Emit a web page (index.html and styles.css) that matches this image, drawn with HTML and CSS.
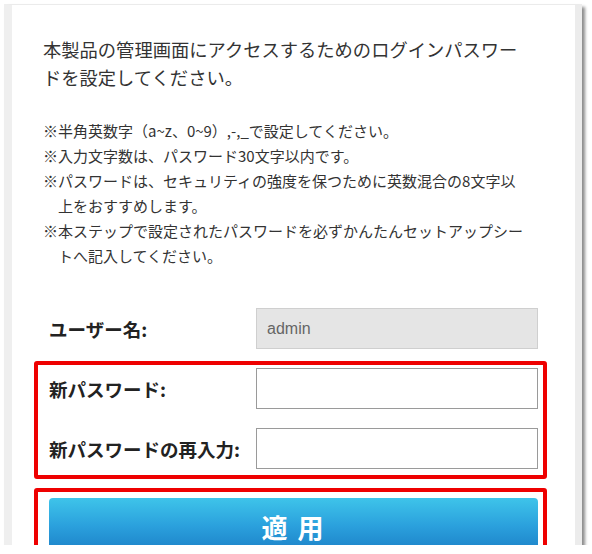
FILE: index.html
```html
<!DOCTYPE html>
<html lang="ja">
<head>
<meta charset="utf-8">
<link rel="stylesheet" href="styles.css">
</head>
<body>
<div class="page">
  <div class="frame">
    <div class="content">
      <p class="lead">本製品の管理画面にアクセスするためのログインパスワー<br>ドを設定してください。</p>
      <ul class="notes">
        <li>※半角英数字（a~z、0~9）,-,_で設定してください。</li>
        <li>※入力文字数は、パスワード30文字以内です。</li>
        <li>※パスワードは、セキュリティの強度を保つために英数混合の8文字以<br>上をおすすめします。</li>
        <li>※本ステップで設定されたパスワードを必ずかんたんセットアップシー<br>トへ記入してください。</li>
      </ul>
      <div class="form">
        <div class="row plain">
          <label class="label">ユーザー名:</label>
          <div class="input readonly">admin</div>
        </div>
        <div class="box fields">
          <div class="row">
            <label class="label">新パスワード:</label>
            <div class="input"></div>
          </div>
          <div class="row">
            <label class="label">新パスワードの再入力:</label>
            <div class="input"></div>
          </div>
        </div>
        <div class="box action">
          <button class="apply">適 用</button>
        </div>
      </div>
    </div>
  </div>
</div>
</body>
</html>
```
FILE: styles.css
```css
html, body {
  margin: 0;
  padding: 0;
  background: #ffffff;
}
body {
  font-family: "Noto Sans CJK JP", "Noto Sans", sans-serif;
  color: #333333;
}
.page {
  padding: 4px 0 0 4px;
}
.frame {
  width: 563px;
  height: 540px;
  overflow: hidden;
  background: #ffffff;
  border-left: 8px solid #efefef;
  border-right: 7px solid #ececec;
  border-top: 1px solid #ebebeb;
  box-sizing: content-box;
  box-shadow: 3px 3px 3px rgba(0, 0, 0, 0.45);
}
.content {
  padding: 30px 0 0 31px;
}
.lead {
  margin: 0;
  font-size: 18.3px;
  line-height: 28px;
  color: #333333;
}
.notes {
  list-style: none;
  margin: 27px 0 0 0;
  padding: 0;
  font-size: 15px;
  line-height: 25px;
  color: #333333;
}
.notes li {
  padding-left: 1em;
  text-indent: -1em;
}
.form {
  margin: 40px 0 0 -9px;
  width: 513px;
}
.row {
  display: grid;
  grid-template-columns: 207px 282px;
  align-items: center;
}
.row.plain {
  padding: 0 5px 0 15px;
}
.label {
  font-size: 18.5px;
  font-weight: bold;
  color: #222222;
  white-space: nowrap;
}
.input {
  height: 41px;
  box-sizing: border-box;
  border: 1px solid #9a9a9a;
  background: #ffffff;
}
.input.readonly {
  background: #e5e5e5;
  border-color: #cfcfcf;
  color: #666666;
  font-family: "Liberation Sans", Arial, sans-serif;
  font-size: 16px;
  line-height: 39px;
  padding-left: 10px;
}
.box {
  border: 4px solid #ee0000;
  border-radius: 3px;
}
.fields {
  margin-top: 12px;
  padding: 3px 5px 6px 11px;
  display: flex;
  flex-direction: column;
  gap: 19px;
}
.action {
  margin-top: 9px;
  padding: 6px 5px 20px 11px;
}
.apply {
  display: block;
  width: 489px;
  height: 58px;
  border: none;
  border-radius: 4px;
  background: linear-gradient(to bottom, #3ec4ea 0%, #2a9fdc 50%, #1a7cc4 100%);
  color: #ffffff;
  font-family: "Noto Sans CJK JP", sans-serif;
  font-size: 26px;
  font-weight: bold;
  letter-spacing: 2px;
  padding: 0;
  line-height: 58px;
}
```
